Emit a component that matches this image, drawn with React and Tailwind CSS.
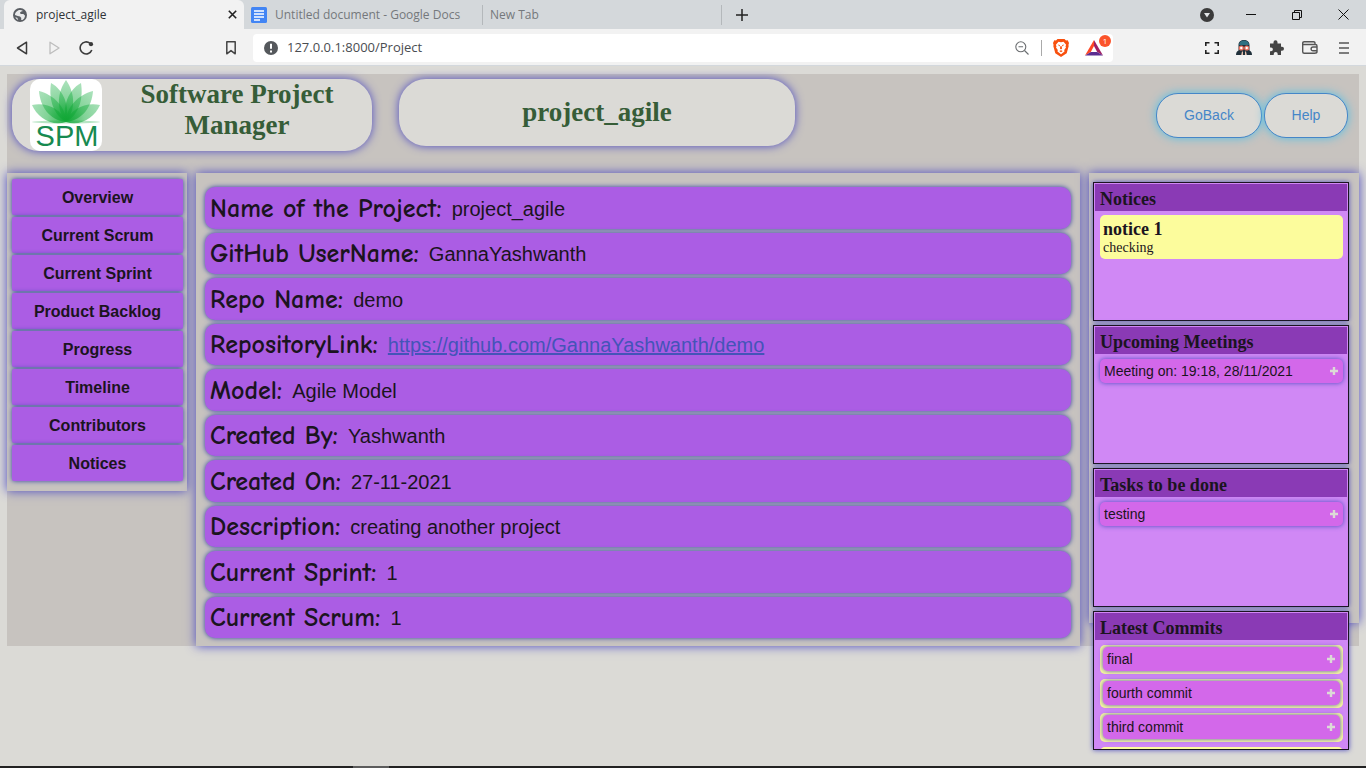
import React from "react";

const navItems = [
  "Overview",
  "Current Scrum",
  "Current Sprint",
  "Product Backlog",
  "Progress",
  "Timeline",
  "Contributors",
  "Notices",
];

const details = [
  { label: "Name of the Project:", value: "project_agile" },
  { label: "GitHub UserName:", value: "GannaYashwanth" },
  { label: "Repo Name:", value: "demo" },
  {
    label: "RepositoryLink:",
    value: "https://github.com/GannaYashwanth/demo",
    link: true,
  },
  { label: "Model:", value: "Agile Model" },
  { label: "Created By:", value: "Yashwanth" },
  { label: "Created On:", value: "27-11-2021" },
  { label: "Description:", value: "creating another project" },
  { label: "Current Sprint:", value: "1" },
  { label: "Current Scrum:", value: "1" },
];

const commits = ["final", "fourth commit", "third commit"];

function TabStrip() {
  return (
    <div className="flex h-[29px] items-stretch bg-[#d4d8db] pl-1 text-[12px]">
      <div className="flex w-60 items-center rounded-t-md bg-[#f2f2f2] pr-1 pl-[9px] text-[#2f3337]">
        <svg width="14" height="14" viewBox="0 0 14 14" aria-hidden="true">
          <circle cx="7" cy="7" r="7" fill="#5a5e63" />
          <path
            d="M4 3.300C5.500 1.700 8.500 1.800 10 3L8.200 3.400 7 4.600l.6 1.300 2.800.1 1.700 1.700-.9 2.700-1.700 1.500-1.500-.2.300-1.800-1.300-1.500-2.300-.4L2 7C1.900 5.600 2.500 4.300 4 3.300zM2.300 9.300l2 .4.9 2.300C3.800 11.500 2.800 10.500 2.300 9.300z"
            fill="#e9eaeb"
          />
        </svg>
        <span className="ml-[9px] flex-1">project_agile</span>
        <button type="button" aria-label="Close tab" className="flex w-4 justify-center">
          <svg width="9" height="9" viewBox="0 0 9 9" stroke="#222" strokeWidth="1.600">
            <path d="M.8.8l7.400 7.400M8.200.8L.8 8.200" />
          </svg>
        </button>
      </div>
      <div className="flex w-[239px] items-center py-1.5 pl-[7px] text-[#74787c]">
        <svg width="16" height="16" viewBox="0 0 16 16" aria-hidden="true">
          <rect width="16" height="16" rx="1.500" fill="#4285f4" />
          <path d="M3 4h10M3 7h10M3 10h10M3 13h6" stroke="#fff" strokeWidth="1.500" />
        </svg>
        <span className="ml-2 flex-1 border-r border-[#b4b8bb] leading-[20px]">
          Untitled document - Google Docs
        </span>
      </div>
      <div className="flex w-[239px] items-center py-1.5 pl-[7px] text-[#74787c]">
        <span className="flex-1 border-r border-[#b4b8bb] leading-[20px]">New Tab</span>
      </div>
      <button type="button" aria-label="New tab" className="ml-3.5 flex items-center">
        <svg width="12" height="12" viewBox="0 0 12 12" stroke="#222" strokeWidth="1.500">
          <path d="M6 0v12M0 6h12" />
        </svg>
      </button>
      <div className="ml-auto flex items-center pr-[17px]">
        <button type="button" aria-label="Search tabs">
          <svg width="14" height="14" viewBox="0 0 14 14">
            <circle cx="7" cy="7" r="7" fill="#3b3b3b" />
            <path d="M4 5h6L7 9.600z" fill="#e4e6e8" />
          </svg>
        </button>
        <button type="button" aria-label="Minimise" className="ml-8">
          <svg width="10" height="10" viewBox="0 0 10 10" stroke="#111">
            <path d="M0 4.500h10" />
          </svg>
        </button>
        <button type="button" aria-label="Restore" className="ml-9">
          <svg width="10" height="10" viewBox="0 0 10 10" fill="none" stroke="#111">
            <path d="M.5 2.500h7v7h-7zM2.500 2.500v-2h7v7h-2" />
          </svg>
        </button>
        <button type="button" aria-label="Close" className="ml-9">
          <svg width="11" height="11" viewBox="0 0 11 11" stroke="#111">
            <path d="M.5.5l10 10M10.500.5l-10 10" />
          </svg>
        </button>
      </div>
    </div>
  );
}

function Toolbar() {
  return (
    <div className="flex h-[37px] items-center border-b border-[#d3d8dd] bg-[#f2f2f2] pt-px pr-[17px] pl-4 text-[#333]">
      <button type="button" aria-label="Back">
        <svg width="12" height="14" viewBox="0 0 12 14" fill="none" stroke="#3b3b3b" strokeWidth="1.500" strokeLinejoin="round">
          <path d="M10.500 1.200v11.600L1.500 7z" />
        </svg>
      </button>
      <button type="button" aria-label="Forward" className="ml-[21px]">
        <svg width="12" height="14" viewBox="0 0 12 14" fill="none" stroke="#bdbdbd" strokeWidth="1.300" strokeLinejoin="round">
          <path d="M1 1.200v11.600L10 7z" />
        </svg>
      </button>
      <button type="button" aria-label="Reload" className="ml-[18px]">
        <svg width="15" height="14" viewBox="0 0 15 14" fill="none" stroke="#3b3b3b" strokeWidth="1.600">
          <path d="M12.800 9A6 6 0 1 1 11 2.300" />
          <circle cx="12" cy="3.200" r="2.100" fill="#3b3b3b" stroke="none" />
        </svg>
      </button>
      <button type="button" aria-label="Bookmark" className="ml-[132px]">
        <svg width="10" height="14" viewBox="0 0 10 14" fill="none" stroke="#444" strokeWidth="1.500" strokeLinejoin="round">
          <path d="M.8.8h8.400v12L5 9.600.8 12.800z" />
        </svg>
      </button>
      <div className="ml-[17px] flex h-7 w-[860px] items-center rounded-sm bg-white pr-[2px] pl-[11px]">
        <svg width="14" height="14" viewBox="0 0 14 14" aria-hidden="true">
          <circle cx="7" cy="7" r="7" fill="#55585c" />
          <path d="M7 2.800v5M7 9.400v2" stroke="#fff" strokeWidth="2" />
        </svg>
        <input
          aria-label="Address"
          defaultValue="127.0.0.1:8000/Project"
          className="ml-[9px] min-w-0 flex-1 bg-transparent text-[13px] text-[#4a4d51] outline-none"
        />
        <svg width="14" height="14" viewBox="0 0 14 14" fill="none" stroke="#6a6d70" strokeWidth="1.100" aria-hidden="true">
          <circle cx="5.800" cy="5.800" r="5" />
          <path d="M9.500 9.500l4 4M3.500 5.800h4.600" />
        </svg>
        <span className="ml-3 h-4 border-l border-[#aaa]" />
        <svg className="ml-[11px]" width="16" height="18" viewBox="0 0 16 18" aria-hidden="true">
          <path d="M4.500 0h7l1.500 1.400 1.700-.1L16 4l-.6 2 .3 1-2 7.200L8 18l-5.700-3.800L.3 7l.3-1L0 4l1.300-2.700 1.700.1z" fill="#f8500e" />
          <path d="M5.500 2.800L8 3.300l2.500-.5 2.600 3-.6 1.600.5 1-1.800 2.600.3 1.600L8 15.300l-3.500-2.700.3-1.600L3 8.400l.5-1-.6-1.600z" fill="#fff" />
          <path d="M4.600 5.600l2.300.5-.3 1.300zM11.400 5.600l-2.300.5.3 1.300zM7.500 7h1l.6 2.600L8 10.400l-1.100-.8zM6.300 12L8 11.200 9.700 12 8 13.200z" fill="#f8500e" />
        </svg>
        <div className="relative ml-4 h-[18px] w-[26px]">
          <svg width="18" height="16" viewBox="0 0 18 16" className="mt-px" aria-hidden="true">
            <path d="M9 0L0 15.500 5.800 12 9 6z" fill="#ff4724" />
            <path d="M9 0l9 15.500-5.800-3.500L9 6z" fill="#9e1f63" />
            <path d="M0 15.500h18L12.200 12H5.800z" fill="#5c2d91" />
          </svg>
          <span className="absolute -top-1 right-0 flex h-3 w-3 items-center justify-center rounded-full bg-[#fb542b] text-[8px] text-white">
            1
          </span>
        </div>
      </div>
      <div className="ml-auto flex items-center">
        <button type="button" aria-label="Capture">
          <svg width="14" height="12" viewBox="0 0 14 12" fill="none" stroke="#222" strokeWidth="1.600">
            <path d="M.8 4V.8H4.500M9.500 .8h3.700V4M13.200 8v3.200H9.500M4.500 11.200H.8V8" />
          </svg>
        </button>
        <svg className="ml-[17px]" width="16" height="15" viewBox="0 0 16 15" aria-hidden="true">
          <path d="M0 15c0-3 1.500-4 2.500-4.500V5C2.500 1.500 5 0 8 0s5.500 1.500 5.500 5v5.500c1 .5 2.500 1.500 2.500 4.500z" fill="#20303b" />
          <path d="M3 5C3 2 5 .5 8 .5S13 2 13 5z" fill="#2f7182" />
          <circle cx="5.300" cy="8" r="2.600" fill="#e8735f" />
          <circle cx="10.700" cy="8" r="2.600" fill="#e8735f" />
          <circle cx="5.300" cy="8" r="1.200" fill="#fff" />
          <circle cx="10.700" cy="8" r="1.200" fill="#fff" />
          <path d="M6 11.500h4l.8 3.500H5.200z" fill="#e8c3b0" />
          <path d="M7 11h2v4H7z" fill="#20303b" />
        </svg>
        <button type="button" aria-label="Extensions" className="ml-[17px]">
          <svg width="15" height="15" viewBox="0 0 15 15" fill="#444">
            <path d="M1 3.500h3.500V2.300a2 2 0 0 1 4 0v1.200H12v3.300h1a2 2 0 0 1 0 4h-1V15H8.700v-1a2 2 0 0 0-4 0v1H1v-3.800h1a1.900 1.900 0 0 0 0-3.800H1z" />
          </svg>
        </button>
        <button type="button" aria-label="Wallet" className="ml-[18px]">
          <svg width="16" height="13" viewBox="0 0 16 13" fill="none" stroke="#555" strokeWidth="1.400">
            <path d="M13 3.500V2.200Q13 .7 11.500.7H2.200Q.7.7.7 2.200v8.600q0 1.500 1.500 1.500h10.300Q15 12.300 15 10.800V5q0-1.500-1.500-1.500H1M15 6h-4a1.800 1.800 0 0 0 0 3.800h4" />
          </svg>
        </button>
        <button type="button" aria-label="Menu" className="ml-[21px]">
          <svg width="10" height="12" viewBox="0 0 10 12" stroke="#555" strokeWidth="1.500">
            <path d="M0 1h10M0 6h10M0 11h10" />
          </svg>
        </button>
      </div>
    </div>
  );
}

function Logo() {
  return (
    <svg width="72" height="72" viewBox="0 0 72 72" className="shrink-0 rounded-[10px] bg-white" role="img" aria-label="SPM">
      <defs>
        <radialGradient id="petal" gradientUnits="userSpaceOnUse" cx="36" cy="42" r="38">
          <stop offset="0" stopColor="#10a634" stopOpacity=".85" />
          <stop offset=".5" stopColor="#1cae42" stopOpacity=".55" />
          <stop offset="1" stopColor="#3dbb62" stopOpacity=".45" />
        </radialGradient>
      </defs>
      <g fill="url(#petal)">
        <path d="M36 43C26 30 27 14 36 1C45 14 46 30 36 43Z" />
        <path d="M36 43C21 34 19 17 21 4C34 11 40 28 36 43Z" />
        <path d="M36 43C51 34 53 17 51 4C38 11 32 28 36 43Z" />
        <path d="M36 43C19 41 10 27 9 12C24 16 36 28 36 43Z" />
        <path d="M36 43C53 41 62 27 63 12C48 16 36 28 36 43Z" />
        <path d="M36 43C21 48 7 38 2 26C17 23 31 30 36 43Z" />
        <path d="M36 43C51 48 65 38 70 26C55 23 41 30 36 43Z" />
      </g>
      <ellipse cx="36" cy="43" rx="34" ry="1.500" fill="#12a83c" fillOpacity=".3" />
      <text x="37" y="67" textAnchor="middle" fontFamily="Liberation Sans, Arial, sans-serif" fontSize="29" fill="#178a50">
        SPM
      </text>
    </svg>
  );
}

function Panel({ title, children }) {
  return (
    <section className="h-[139px] shrink-0 overflow-hidden border border-[#1b1420] bg-[#d088f5] p-px shadow-[0_0_5px_#4d4bc1]">
      <h2 className="h-[27px] bg-[#8a3ab5] pl-[5px] font-['Liberation_Serif',serif] text-[18px] leading-[30px] font-bold text-[#1b1420]">
        {title}
      </h2>
      <div className="pt-1 pr-1 pl-[5px]">{children}</div>
    </section>
  );
}

function PlusIcon() {
  return (
    <svg width="8" height="8" viewBox="0 0 8 8" stroke="#dcdad6" strokeWidth="2.400" aria-hidden="true">
      <path d="M4 0v8M0 4h8" />
    </svg>
  );
}

function Expander({ children }) {
  return (
    <button
      type="button"
      className="flex h-6 w-full items-center justify-between rounded-[5px] bg-[#d368ea] pr-[5px] pl-1 text-left text-[14px] text-[#1b1420] shadow-[0_0_5px_#4d4bc1]"
    >
      {children}
      <PlusIcon />
    </button>
  );
}

export default function App() {
  return (
    <div className="flex min-h-screen flex-col bg-[#dbdad6] font-['Liberation_Sans',Arial,sans-serif]">
      <header className="font-['Open_Sans','Noto_Sans',sans-serif]">
        <TabStrip />
        <Toolbar />
      </header>

      <main className="flex-1 px-[7px] pt-2">
        <div className="h-[572px] bg-[#c7c3bf]">
          <div className="flex h-[99px] items-start pt-[5px] pr-[11px] pl-[5px]">
            <div className="flex h-[72px] w-[360px] rounded-[27px] bg-[#dbdad6] pl-[18px] shadow-[0_0_10px_#4d4bc1]">
              <Logo />
              <h1 className="flex-1 px-8 text-center font-['Liberation_Serif',serif] text-[27px] leading-[31px] font-bold text-[#365d38]">
                Software Project Manager
              </h1>
            </div>
            <div className="ml-[27px] flex h-[67px] w-[396px] items-center justify-center rounded-[27px] bg-[#dbdad6] shadow-[0_0_10px_#4d4bc1]">
              <h2 className="font-['Liberation_Serif',serif] text-[27px] leading-[31px] font-bold text-[#365d38]">
                project_agile
              </h2>
            </div>
            <div className="mt-3.5 ml-auto flex gap-0.5 text-[14px] text-[#4586c8]">
              <button type="button" className="h-[45px] w-[106px] rounded-[22px] border border-[#4586c8] bg-[#dbdad6] shadow-[0_0_10px_#55bfe5]">
                GoBack
              </button>
              <button type="button" className="h-[45px] w-[84px] rounded-[22px] border border-[#4586c8] bg-[#dbdad6] shadow-[0_0_10px_#55bfe5]">
                Help
              </button>
            </div>
          </div>

          <div className="flex items-start gap-[9px]">
            <nav className="w-[180px] shrink-0 bg-[#c7c3bf] pt-[6px] pr-1 pb-[10px] pl-[5px] shadow-[0_0_10px_#4d4bc1]">
              <div className="grid h-[302px] grid-rows-8 gap-0.5">
                {navItems.map((item) => (
                  <button
                    key={item}
                    type="button"
                    className="rounded-xs bg-[#ab5de4] pt-px text-[16px] font-bold text-[#1b1420] shadow-[0_0_5px_#3040a0]"
                  >
                    {item}
                  </button>
                ))}
              </div>
            </nav>

            <section className="min-w-0 flex-1 bg-[#c7c3bf] px-[9px] pt-3.5 pb-2 shadow-[0_0_10px_#4d4bc1]">
              <dl className="grid h-[451px] grid-rows-10 gap-1">
                {details.map((row) => (
                  <div
                    key={row.label}
                    className="flex items-center gap-2.5 rounded-[10px] bg-[#ab5de4] px-[5px] pt-0.5 text-[20px] text-[#1b1420] shadow-[0_0_5px_#3040a0]"
                  >
                    <dt className="font-['Comic_Sans_MS','Comic_Neue','Noto_Sans',sans-serif] text-[26px] leading-[30px] font-bold">
                      {row.label}
                    </dt>
                    <dd>
                      {row.link ? (
                        <a href={row.value} className="text-[#4454b8] underline">
                          {row.value}
                        </a>
                      ) : (
                        row.value
                      )}
                    </dd>
                  </div>
                ))}
              </dl>
            </section>

            <aside className="flex h-[450px] w-[270px] shrink-0 flex-col gap-1 bg-[#c7c3bf] pt-[9px] pr-2.5 pl-1 shadow-[0_0_10px_#4d4bc1]">
              <Panel title="Notices">
                <article className="h-11 rounded-[5px] bg-[#fcfc9c] px-[3px] pt-1 font-['Liberation_Serif',serif] text-[#1b1420]">
                  <h3 className="text-[18px] leading-[20px] font-bold">notice 1</h3>
                  <p className="text-[14px] leading-[17px]">checking</p>
                </article>
              </Panel>
              <Panel title="Upcoming Meetings">
                <div className="pt-px">
                  <Expander>Meeting on: 19:18, 28/11/2021</Expander>
                </div>
              </Panel>
              <Panel title="Tasks to be done">
                <div className="pt-px">
                  <Expander>testing</Expander>
                </div>
              </Panel>
              <Panel title="Latest Commits">
                <div className="flex flex-col gap-[5px] pt-px">
                  {commits.map((commit) => (
                    <div key={commit} className="rounded-[5px] bg-[#fcfc9c] px-[3px] pt-[2px] pb-[3px]">
                      <Expander>{commit}</Expander>
                    </div>
                  ))}
                  <div className="h-2 rounded-t-[5px] bg-[#fcfc9c]" />
                </div>
              </Panel>
            </aside>
          </div>
        </div>
      </main>
      <footer className="flex h-0.5 bg-[#222]">
        <span className="ml-[353px] w-9 bg-[#5c5c5c]" />
      </footer>
    </div>
  );
}
